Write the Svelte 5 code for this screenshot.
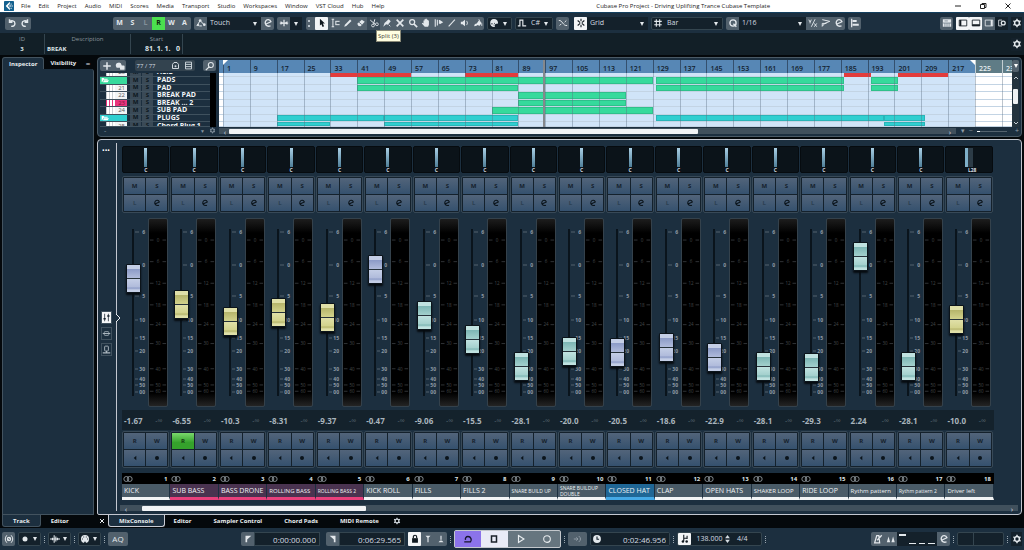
<script lang="ts">
  type Clip = { row: number; from: number; to: number; color: string };

  const icons: Record<string, string> = {
    logo: '<rect width="12" height="12" rx="1" fill="#14618f"/><path d="M7 1L2 6l5 5V8.500L4.700 6 7 3.500zM8 3h1v1.500H8zM6.500 5H8v2H6.500zM9 5.500h1.500v1H9zM8 8h1v1.500H8z" fill="#fff"/>',
    undo: '<path d="M3 1.500v3.500h3.500M3.200 4.800C5 2.500 9.500 3 9.500 6.500S6.500 10 5 10" fill="none" stroke="currentColor" stroke-width="1.700"/>',
    redo: '<path d="M9 1.500v3.500H5.500M8.800 4.800C7 2.500 2.500 3 2.500 6.500S5.500 10 7 10" fill="none" stroke="currentColor" stroke-width="1.700"/>',
    automation: '<path d="M1 9.500L5 3l5 5.500M4 9.500h3" fill="none" stroke="currentColor" stroke-width="1.200"/><circle cx="5" cy="3" r="1.600" fill="currentColor"/><circle cx="10" cy="8" r="1.600" fill="currentColor"/><circle cx="2.500" cy="8.500" r="1.300" fill="currentColor"/>',
    edit: '<path d="M3 7.500L9.500 4.500C8.500 1.500 4.500 1 3 4S4 11 9 9.500" fill="none" stroke="currentColor" stroke-width="1.600"/>',
    scroll: '<path d="M1 6h10M6 2v8" stroke="currentColor" stroke-width="1.500"/><path d="M2 3.500L5 6 2 8.500zM10 3.500L7 6l3 2.500z" fill="currentColor"/>',
    arrow: '<path d="M3.500 1l6 5.500H7l1.500 3.500-1.800.700L5.300 7.400 3.500 9z" fill="currentColor"/>',
    range: '<path d="M2 1.500h3M2 10.500h3M3.500 1.500v9" stroke="currentColor" stroke-width="1.200"/><path d="M6.500 4h5M6.500 8h5M7 4v4" stroke="currentColor" stroke-width="1.200"/>',
    pencil: '<path d="M1.500 10.500l.8-2.500L8.500 1.800l1.700 1.700L4 9.700z" fill="currentColor"/>',
    eraser: '<path d="M1.500 7L7 2l3.500 2.500L5.500 10 3 9.500z" fill="currentColor"/><path d="M3.500 5l3.500 3" stroke="#52616d"/>',
    split: '<path d="M1.500 2.500L8 8M7 1.500L5.500 7" stroke="currentColor" stroke-width="1.200"/><circle cx="4.800" cy="9" r="1.700" fill="none" stroke="currentColor"/><circle cx="9.500" cy="7.500" r="1.700" fill="none" stroke="currentColor"/>',
    glue: '<path d="M1.500 10.500L3 6l5-4.500 2.500 2.500-3.500 4-2-.5z" fill="currentColor"/><path d="M8 8l2 2" stroke="currentColor"/>',
    mute: '<path d="M2 2l8 8M10 2l-8 8" stroke="currentColor" stroke-width="2"/>',
    zoom: '<circle cx="5" cy="4.800" r="3" fill="none" stroke="currentColor" stroke-width="1.500"/><path d="M7 7l4 4" stroke="currentColor" stroke-width="2"/>',
    hand: '<path d="M3 3h1.200V1.500h1.300V1H7v1h1.300v1h1.200v5L8.500 10.500h-4L1 6.500l.8-.8L3 6.500z" fill="currentColor"/>',
    warp: '<path d="M1.500 1.500v9M4 2v7M6.500 2.500v4.500" stroke="currentColor" stroke-width="1.300"/><path d="M7 2.500l4 2.500-4 2.500z" fill="currentColor"/>',
    line: '<path d="M2 10L9.500 2" stroke="currentColor" stroke-width="1.300"/>',
    speaker: '<path d="M1 4.500h2L6 2v8L3 7.500H1z" fill="currentColor"/><path d="M8 3.500q2 2.500 0 5" fill="none" stroke="currentColor"/>',
    bucket: '<path d="M1.500 10c0-2.500 1-3.500 3-3.500L7 3l3.500 3-3 3.500-1.500-1c-1.500 0-2 1.500-4.500 1.500z" fill="currentColor"/><path d="M7 1.500l1.500 3M10.500 6.500v3" stroke="currentColor"/>',
    palette: '<path d="M6 1.200A4.800 4.800 0 1 0 6.500 10.800C8 10 6 8.500 7.500 7.500S11 8 10.800 5.500A4.800 4.800 0 0 0 6 1.200" fill="currentColor"/><path d="M2.500 7h2M5.500 8.500h1M6 6.500h1" stroke="#14212b" stroke-width="1"/>',
    pulse: '<path d="M1 9.500h2.500V2.500H7v7h4" fill="none" stroke="currentColor" stroke-width="1.400"/>',
    cross: '<path d="M1 3c4-1 5 7 10 6M2 9l2-2M8 5l2-2" fill="none" stroke="currentColor" stroke-width="1.200"/>',
    snap: '<path d="M6 1v3M6 8v3M2 3l3 2.500M10 3L7 5.500M2 9l3-2.500M10 9L7 6.500" stroke="currentColor" stroke-width="1.300"/>',
    grid: '<path d="M4 1.500v9M8 1.500v9M1.500 4h9M1.500 8h9" stroke="currentColor" stroke-width="1.300"/>',
    quantize: '<circle cx="6" cy="6" r="3.700" fill="none" stroke="currentColor" stroke-width="1.600"/><path d="M6.500 7l3.500 3.500" stroke="currentColor" stroke-width="1.600"/>',
    ratio: '<path d="M8.500 1.500L4 10.500M1 2l1.500 3L4 2M2.500 5v1.500M7.500 6.500l3 4M10.500 6.500l-3 4" fill="none" stroke="currentColor" stroke-width="1.100"/>',
    groove: '<path d="M1.500 2l9 2-6 2.500L1.500 10V6.500h5" fill="none" stroke="currentColor" stroke-width="1.200"/>',
    align: '<path d="M2 1v10" stroke="currentColor" stroke-width="1.500"/><path d="M3 3.500h5M3 8h7.500" stroke="currentColor" stroke-width="2.500"/>',
    keys: '<rect x="1" y="1.500" width="10" height="9" fill="currentColor"/><path d="M1 6h10M3.500 6v4.500M6 6v4.500M8.500 6v4.500M3 3.500h4" stroke="#5c6c78" stroke-width=".8"/>',
    zoneLeft: '<path d="M1.500 2.500h9v7h-9z" fill="none" stroke="currentColor"/><path d="M3 2.500v7" stroke="currentColor" stroke-width="2"/>',
    zoneLower: '<path d="M1.500 2.500h9v7h-9z" fill="none" stroke="currentColor"/><path d="M1.500 8.500h9" stroke="currentColor" stroke-width="2"/>',
    zoneRight: '<path d="M1.500 2.500h9v7h-9z" fill="none" stroke="currentColor"/><path d="M9 2.500v7" stroke="currentColor" stroke-width="2"/>',
    zoneSetup: '<path d="M6 2.500H2v7h4" fill="none" stroke="currentColor"/><circle cx="7.500" cy="6" r="2.300" fill="none" stroke="currentColor" stroke-width="1.600"/>',
    gear: '<circle cx="6" cy="6" r="2.900" fill="none" stroke="currentColor" stroke-width="1.800"/><path d="M6 1v2M6 9v2M1.700 3.500l1.700 1M8.600 7.500l1.700 1M1.700 8.500l1.700-1M8.600 4.500l1.700-1" stroke="currentColor" stroke-width="1.700"/>',
    plus: '<path d="M6 1.500v9M1.500 6h9" stroke="currentColor" stroke-width="1.800"/>',
    preset: '<path d="M1 6a3.500 3.500 0 0 1 7-1v3H2z" fill="currentColor"/><rect x="6" y="5.500" width="5.500" height="5" rx="1" fill="currentColor"/>',
    home: '<path d="M2 10V4.500l2-2.500h4l2 2.500V10z" fill="none" stroke="currentColor" stroke-width="1.300"/><circle cx="6" cy="7" r="1.300" fill="currentColor"/>',
    list: '<path d="M2 1.500h8v9H2zM2 4.500h8M2 7.500h8" fill="none" stroke="currentColor" stroke-width="1.200"/>',
    search: '<circle cx="7" cy="4.800" r="3" fill="none" stroke="currentColor" stroke-width="1.300"/><path d="M5 7l-4 4" stroke="currentColor" stroke-width="1.500"/>',
    faders: '<path d="M3.500 1v10M8.500 1v10" stroke="currentColor"/><path d="M2 7.500h3M7 4h3" stroke="currentColor" stroke-width="2"/>',
    insert: '<path d="M1 6h10" stroke="currentColor" stroke-width="1.300"/><rect x="3" y="3.500" width="6" height="5" rx="1" fill="none" stroke="currentColor"/>',
    room: '<rect x="3.500" y="1.500" width="5" height="6.500" rx="1" fill="none" stroke="currentColor" stroke-width="1.200"/><path d="M1 10.500h10M6 8v2.500" stroke="currentColor" stroke-width="1.400"/>',
    monitor: '<path d="M8 2.500v7L4 6z" fill="currentColor"/>',
    record: '<circle cx="6" cy="6" r="3" fill="currentColor"/>',
    stereo: '<circle cx="4" cy="6" r="3" fill="none" stroke="currentColor"/><circle cx="8" cy="6" r="3" fill="none" stroke="currentColor"/>',
    midiIn: '<circle cx="6" cy="6" r="2" fill="none" stroke="currentColor" stroke-width="1.300"/><path d="M3.500 1.500q-4 4.500 0 9M8.500 1.500q4 4.500 0 9M5 8l2-4" fill="none" stroke="currentColor" stroke-width="1.200"/>',
    wave: '<path d="M0 6h12M3 4.500v3M5 1.500v9M7 3v6M9 4.500v3" stroke="currentColor" stroke-width="1.300"/>',
    midi: '<circle cx="6" cy="6" r="4.800" fill="currentColor"/><path d="M2.500 6h1M8.500 6h1M4 3.500h1M7 3.500h1M5 10h2" stroke="#14212b" stroke-width="1.300"/>',
    flagL: '<path d="M3 2h7L5 6.500V10H3z" fill="currentColor"/>',
    flagR: '<path d="M9 2H2l5 4.500V10h2z" fill="currentColor"/>',
    lock: '<rect x="2.500" y="5" width="7" height="5.500" fill="currentColor"/><path d="M4 5V3.500a2 2 0 0 1 4 0V5" fill="none" stroke="currentColor" stroke-width="1.400"/>',
    punchIn: '<path d="M3 2h6L6 5zM5.300 4h1.400v6H5.300z" fill="currentColor"/>',
    punchOut: '<path d="M3 10h6L6 6.500zM5.300 2h1.400v6H5.300z" fill="currentColor"/>',
    cycle: '<path d="M1.500 9.500H9c2-2.500.5-6.500-3-6.500C3.500 3 2.500 5 3 7" fill="none" stroke="currentColor" stroke-width="1.600"/>',
    stop: '<path d="M3 2.500h6v7H3z" fill="none" stroke="currentColor" stroke-width="1.800"/>',
    play: '<path d="M3 1.800L9.500 6 3 10.200z" fill="none" stroke="currentColor" stroke-width="1.400"/>',
    rec: '<circle cx="6" cy="6" r="4" fill="none" stroke="currentColor" stroke-width="1.300"/>',
    bounce: '<path d="M1 6h5M4 4l2 2-2 2M7 2.500q4 3.500 0 7" fill="none" stroke="currentColor" stroke-width="1.200"/>',
    clock: '<circle cx="6" cy="6" r="4.700" fill="currentColor"/><path d="M6 3v3.300h2.500" fill="none" stroke="#14212b" stroke-width="1.300"/>',
    tempo: '<path d="M4.500 1v7.500M4.500 5H8M8.500 2v4" fill="none" stroke="currentColor" stroke-width="1.300"/><circle cx="3.500" cy="9" r="1.500" fill="currentColor"/><circle cx="8" cy="9" r="1.500" fill="currentColor"/>',
    metronome: '<path d="M2 10.500L4.500 2H7l1 8.500zM5 7.500L10.500 1.500" fill="none" stroke="currentColor" stroke-width="1.500"/>',
    precount: '<path d="M1 10l2-7 2 7zM6.500 10l2-7 2 7z" fill="currentColor"/>',
    folder: '<path d="M1 9V3h3l1 1h5v1.500H4L2 9zM4.500 6.500H12L10 9.500H3z" fill="currentColor"/>',
  };

  const menus = ['File', 'Edit', 'Project', 'Audio', 'MIDI', 'Scores', 'Media', 'Transport', 'Studio', 'Workspaces', 'Window', 'VST Cloud', 'Hub', 'Help'];
  const states = ['M', 'S', 'L', 'R', 'W', 'A'];
  const tools = ['arrow', 'range', 'pencil', 'eraser', 'split', 'glue', 'mute', 'zoom', 'hand', 'warp', 'line', 'speaker', 'bucket'];
  const lowerTabs = ['MixConsole', 'Editor', 'Sampler Control', 'Chord Pads', 'MIDI Remote'];

  const tracks = [
    { id: 20, name: 'ACID', kind: 'midi' },
    { id: 0, name: 'PADS', kind: 'green' },
    { id: 21, name: 'PAD', kind: 'midi' },
    { id: 22, name: 'BREAK PAD', kind: 'midi' },
    { id: 23, name: 'BREAK ... 2', kind: 'pink' },
    { id: 24, name: 'SUB PAD', kind: 'midi' },
    { id: 1, name: 'PLUGS', kind: 'cyan' },
    { id: 25, name: 'Chord Plug 1', kind: 'midi' },
  ];

  const clips: Clip[] = [
    { row: 0, from: 33, to: 57, color: 'red' },
    { row: 0, from: 73, to: 89, color: 'red' },
    { row: 0, from: 186, to: 194, color: 'red' },
    { row: 0, from: 202, to: 217, color: 'red' },
    { row: 1, from: 41, to: 129, color: 'green' },
    { row: 1, from: 130, to: 186, color: 'green' },
    { row: 1, from: 194, to: 202, color: 'green' },
    { row: 2, from: 41, to: 89, color: 'green' },
    { row: 2, from: 130, to: 186, color: 'green' },
    { row: 2, from: 194, to: 202, color: 'green' },
    { row: 3, from: 89, to: 121, color: 'green' },
    { row: 4, from: 89, to: 121, color: 'green' },
    { row: 5, from: 81, to: 129, color: 'green' },
    { row: 6, from: 17, to: 49, color: 'cyan' },
    { row: 6, from: 49, to: 89, color: 'cyan' },
    { row: 6, from: 130, to: 198, color: 'cyan' },
    { row: 6, from: 198, to: 210, color: 'cyan' },
    { row: 7, from: 17, to: 33, color: 'cyan' },
    { row: 7, from: 49, to: 89, color: 'cyan' },
    { row: 7, from: 198, to: 210, color: 'cyan' },
  ];

  const bars = Array.from({ length: 30 }, (_, i) => i * 8 + 1);

  // share of the timeline width at which a bar starts
  const at = (bar: number) => 0.5 + (bar - 1) * 0.4234;

  const faderMarks = [['6', 15], ['0', 48], ['5', 79], ['10', 103], ['15', 121], ['20', 134], ['30', 152], ['40', 162], ['50', 168], ['00', 175]] as [string, number][];
  const meterMarks = [['0', 14], ['6', 38], ['12', 62], ['18', 86], ['24', 108], ['30', 129], ['40', 157], ['50', 175], ['60', 182]] as [string, number][];

  let channels = $state([
    { name: 'KICK', db: '-1.67', level: 116, cap: 'blue', group: 'plain' },
    { name: 'SUB BASS', db: '-6.55', level: 90, cap: 'yellow', group: 'bass', read: true },
    { name: 'BASS DRONE', db: '-10.3', level: 73, cap: 'yellow', group: 'bass' },
    { name: 'ROLLING BASS', db: '-8.31', level: 82, cap: 'yellow', group: 'bass' },
    { name: 'ROLLING BASS 2', db: '-9.37', level: 77, cap: 'yellow', group: 'bass' },
    { name: 'KICK ROLL', db: '-0.47', level: 125, cap: 'blue', group: 'plain' },
    { name: 'FILLS', db: '-9.06', level: 79, cap: 'teal', group: 'plain' },
    { name: 'FILLS 2', db: '-15.5', level: 55, cap: 'teal', group: 'plain' },
    { name: 'SNARE BUILD UP', db: '-28.1', level: 28, cap: 'teal', group: 'plain' },
    { name: 'SNARE BUILDUP DOUBLE', db: '-20.0', level: 43, cap: 'teal', group: 'plain' },
    { name: 'CLOSED HAT', db: '-20.5', level: 42, cap: 'blue', group: 'selected' },
    { name: 'CLAP', db: '-18.6', level: 47, cap: 'blue', group: 'plain' },
    { name: 'OPEN HATS', db: '-22.9', level: 37, cap: 'blue', group: 'plain' },
    { name: 'SHAKER LOOP', db: '-28.1', level: 28, cap: 'teal', group: 'plain' },
    { name: 'RIDE LOOP', db: '-29.3', level: 27, cap: 'teal', group: 'plain' },
    { name: 'Rythm pattern', db: '2.24', level: 138, cap: 'teal', group: 'plain' },
    { name: 'Rythm pattern 2', db: '-28.1', level: 28, cap: 'teal', group: 'plain' },
    { name: 'Driver left', db: '-10.0', level: 75, cap: 'yellow', group: 'plain', pan: 'L28' },
  ]);

  function nameSize(name: string): string {
    if (name.length > 15) return 'double';
    if (name.length > 13) return 'longer';
    return name.length > 10 ? 'long' : '';
  }
</script>

{#snippet icon(name: string)}
  <svg class="icon" viewBox="0 0 12 12" aria-hidden="true">{@html icons[name]}</svg>
{/snippet}

{#snippet tool(name: string, kind = '')}
  <button class="tool {kind}" aria-label={name}>{@render icon(name)}</button>
{/snippet}

{#snippet picker(label: string, value: string, kind: string)}
  <span class="picker {kind}">
    <select aria-label={label}><option>{value}</option></select>
  </span>
{/snippet}

<div class="app">
  <header class="titlebar">
    <span class="logo">{@render icon('logo')}</span>
    <nav class="menus">
      {#each menus as menu}
        <button class="menu">{menu}</button>
      {/each}
    </nav>
    <h1 class="title">Cubase Pro Project - Driving Uplifting Trance Cubase Template</h1>
    <div class="window-buttons">
      <button aria-label="Minimize"><svg viewBox="0 0 8 8"><path d="M1 4h6" stroke="#222" /></svg></button>
      <button aria-label="Restore"><svg viewBox="0 0 8 8"><path d="M1.500 2.500h4v4h-4zM3 2.500v-1h4v4H5.500" fill="none" stroke="#222" /></svg></button>
      <button aria-label="Close"><svg viewBox="0 0 8 8"><path d="M1.500 1.500l5 5M6.500 1.500l-5 5" stroke="#222" /></svg></button>
    </div>
  </header>

  <div class="toolbar">
    <div class="group history">{@render tool('undo')}{@render tool('redo')}</div>
    <div class="group states">
      {#each states as s}
        <button class="tool" class:on={s === 'R'} class:off={s === 'L'}>{s}</button>
      {/each}
    </div>
    <div class="group">
      {@render tool('automation')}{@render picker('Automation mode', 'Touch', 'w54')}{@render tool('edit')}
    </div>
    <div class="group">{@render tool('scroll')}{@render picker('Auto-scroll', '', 'w12')}</div>
    <div class="group tools">
      <span class="dots"></span>
      {#each tools as t}
        <div class="tool-slot">
          {@render tool(t, t === 'arrow' ? 'white' : t === 'split' ? 'hover' : '')}
          {#if t === 'split'}<span class="tooltip" role="tooltip">Split (3)</span>{/if}
        </div>
      {/each}
    </div>
    <div class="group dark">{@render tool('palette', 'clear')}{@render picker('Color', '', 'w11')}</div>
    <div class="group dark">{@render tool('pulse', 'clear')}{@render picker('Pitch', 'C#', 'w24')}</div>
    <div class="group">{@render tool('cross')}</div>
    <div class="group snap">{@render tool('snap', 'white')}{@render picker('Snap type', 'Grid', 'w61')}</div>
    <div class="group dark">{@render tool('grid', 'clear')}{@render picker('Grid type', 'Bar', 'w58')}</div>
    <div class="group">
      {@render tool('quantize')}{@render picker('Quantize preset', '1/16', 'w67')}{@render tool('ratio')}{@render tool('groove')}{@render tool('edit')}
    </div>
    <div class="group">{@render tool('align')}</div>
    <div class="group push">{@render tool('keys')}</div>
    <div class="group">
      {@render tool('zoneLeft', 'white')}{@render tool('zoneLower', 'white')}{@render tool('zoneRight')}{@render tool('zoneSetup', 'ink')}
    </div>
    <div class="group gear">{@render tool('gear', 'ink')}</div>
  </div>

  <div class="infoline">
    <dl>
      <div class="info-id"><dt>ID</dt><dd>3</dd></div>
      <div class="info-desc"><dt>Description</dt><dd>BREAK</dd></div>
      <div class="info-start"><dt>Start</dt><dd>81. 1. 1. &nbsp; 0</dd></div>
    </dl>
    <div class="group gear">{@render tool('gear', 'ink')}</div>
  </div>

  <main class="workspace">
    <aside class="left-zone">
      <div class="tabs">
        <button class="tab active">Inspector</button>
        <button class="tab">Visibility</button>
        <button class="tab-menu" aria-label="Zone menu">=</button>
      </div>
      <div class="inspector"></div>
      <div class="tabs">
        <button class="tab bottom active">Track</button>
        <button class="tab">Editor</button>
      </div>
    </aside>

    <div class="right-zone">
      <section class="project">
        <div class="tracklist">
          <div class="track-tools">
            <div class="group">{@render tool('plus')}{@render tool('preset')}</div>
            <div class="track-count"><span>77 / 77</span>{@render icon('home')}{@render icon('list')}</div>
            <div class="group">{@render tool('search')}</div>
          </div>
          <div class="rows">
            {#each tracks as track}
              <div class="track {track.kind}">
                <span class="track-head">
                  {#if track.kind === 'green' || track.kind === 'cyan'}
                    <svg class="folder" viewBox="0 0 12 12">{@html icons.folder}</svg>
                  {:else}
                    <i class="keys"></i>{track.id}
                  {/if}
                </span>
                <button class="ms">M</button>
                <button class="ms">S</button>
                <span class="track-name">{track.name}</span>
              </div>
            {/each}
          </div>
          <div class="track-foot"><span>-</span><span class="foot-arrow">▼</span>{@render icon('gear')}</div>
        </div>

        <div class="arrange">
          <div class="arrange-top">
            <div class="timeline">
              <div class="ruler">
                {#each bars as bar}
                  <span class="bar" class:outside={bar > 224} style="left: {at(bar)}%">{bar}</span>
                {/each}
                <span class="past" style="left: {at(225)}%"></span>
                <svg class="locator start" viewBox="0 0 5 5" style="left: {at(1)}%"><path d="M0 0h5L0 5z" /></svg>
                <svg class="locator end" viewBox="0 0 5 5" style="left: {at(225)}%"><path d="M5 0H0l5 5z" /></svg>
              </div>
              <div class="lanes">
                <span class="cycle-range" style="left: {at(1)}%; right: {100 - at(225)}%"></span>
                {#each tracks as track, row}
                  <div class="lane">
                    {#each clips.filter((c) => c.row === row) as clip}
                      <span class="clip {clip.color}" style="left: {at(clip.from)}%; width: {at(clip.to) - at(clip.from)}%"></span>
                    {/each}
                  </div>
                {/each}
                {#each bars as bar}
                  <span class="gridline" style="left: {at(bar)}%"></span>
                {/each}
              </div>
              <span class="playhead" style="left: {at(97)}%"></span>
            </div>
            <div class="vscroll">
              <button class="ruler-menu" aria-label="Ruler format"></button>
              <svg viewBox="0 0 6 4"><path d="M1 3l2-2 2 2" /></svg>
              <span class="vthumb"></span>
              <svg class="down" viewBox="0 0 6 4"><path d="M1 1l2 2 2-2" /></svg>
            </div>
          </div>
          <div class="hscroll">
            <div class="bar-track">
              <span class="chev">‹</span><span class="thumb arrange-thumb"></span><span class="chev last">›</span>
            </div>
            <div class="zoombar"><span>▾</span><span>−</span><i></i><span>+</span></div>
          </div>
        </div>
      </section>

      <section class="mixer">
        <div class="mixer-side">
          <button class="more" aria-label="More">•••</button>
          <div class="views">
            <button class="view on" aria-label="Faders">{@render icon('faders')}</button>
            <button class="view" aria-label="Inserts">{@render icon('insert')}</button>
            <button class="view" aria-label="Control Room">{@render icon('room')}</button>
            <svg class="expander" viewBox="0 0 5 8"><path d="M0 0l4 4-4 4" /></svg>
          </div>
        </div>
        <div class="console">
          <div class="channels">
            {#each channels as ch, i}
              <article class="channel">
                <div class="pan" class:left={ch.pan}><i></i><span>{ch.pan ?? 'C'}</span></div>
                <div class="pad">
                  <button>M</button><button>S</button><button class="dim">L</button><button class="big" aria-label="Edit channel">{@render icon('edit')}</button>
                </div>
                <div class="fader-area">
                  <div class="fader">
                    <svg class="scale" viewBox="0 0 24 192">
                      <rect x="10" y="12" width="2" height="167" fill="#0a141c" />
                      {#each faderMarks as [text, y]}
                        <path d="M13 {y}h{text.length > 1 ? 3 : 4}" stroke="#53626e" />
                        <text x="23" y={y + 2} text-anchor="end">{text}</text>
                      {/each}
                    </svg>
                    <input class="cap-{ch.cap}" type="range" min="0" max="163" bind:value={ch.level} aria-label="{ch.name} level" />
                  </div>
                  <svg class="meter" viewBox="0 0 20 189">
                    {#each meterMarks as [text, y]}
                      <path d="M1 {y}h4M15 {y}h4" stroke="#34383b" />
                      <text x="10" y={y + 2} text-anchor="middle">{text}</text>
                    {/each}
                  </svg>
                </div>
                <div class="levels"><b>{ch.db}</b><span>-∞</span></div>
                <div class="pad">
                  <button class:read={ch.read}>R</button><button>W</button>
                  <button class="big" aria-label="Monitor">{@render icon('monitor')}</button>
                  <button class="big" aria-label="Record enable">{@render icon('record')}</button>
                </div>
                <div class="number">{@render icon('stereo')}<span>{i + 1}</span></div>
                <div class="name {ch.group} {nameSize(ch.name)}"><span>{ch.name}</span></div>
              </article>
            {/each}
          </div>
          <div class="bar-track mixer-scroll">
            <span class="chev">‹</span><span class="thumb mixer-thumb"></span><span class="chev last">›</span>
          </div>
        </div>
      </section>

      <div class="tabs lower-tabs">
        <button class="close" aria-label="Close lower zone"><svg viewBox="0 0 6 6"><path d="M1 1l4 4M5 1L1 5" /></svg></button>
        {#each lowerTabs as t, i}
          <button class="tab" class:bottom={i === 0} class:active={i === 0}>{t}</button>
        {/each}
        <button class="tab-gear" aria-label="Tab setup">{@render icon('gear')}</button>
      </div>
    </div>
  </main>

  <footer class="transport">
    <div class="group">{@render tool('midiIn')}</div>
    <div class="group dark">{@render tool('record', 'clear')}{@render picker('Record mode', '', 'w9')}</div>
    <span class="grip"></span>
    <div class="group dark">{@render tool('wave', 'clear')}{@render picker('Audio record mode', '', 'w9')}</div>
    <span class="grip"></span>
    <div class="group dark">{@render tool('midi', 'clear')}{@render picker('MIDI record mode', '', 'w9')}</div>
    <span class="grip"></span>
    <div class="group"><button class="tool aq">AQ</button></div>
    <div class="group locator-left">{@render tool('flagL')}<input class="time" aria-label="Left locator" value="0:00:00.000" /></div>
    <div class="group locator-right">{@render tool('flagR')}<input class="time" aria-label="Right locator" value="0:06:29.565" /></div>
    <div class="group">{@render tool('lock', 'white')}{@render tool('punchIn')}{@render tool('punchOut')}</div>
    <span class="grip"></span>
    <div class="deck">
      <button class="cycle" aria-label="Cycle">{@render icon('cycle')}</button>
      <button class="stop" aria-label="Stop">{@render icon('stop')}</button>
      <button aria-label="Play">{@render icon('play')}</button>
      <button aria-label="Record">{@render icon('rec')}</button>
    </div>
    <span class="grip"></span>
    <div class="group bounce">{@render tool('bounce', 'wide')}</div>
    <div class="group dark">{@render tool('clock', 'clear')}<input class="time" aria-label="Time" value="0:02:46.956" /></div>
    <span class="grip"></span>
    <div class="group dark tempo">
      {@render tool('tempo', 'white')}
      <input aria-label="Tempo" value="138.000" />
      <svg class="spin" viewBox="0 0 6 10"><path d="M3 0l3 4H0zM3 10l3-4H0z" /></svg>
      <span class="signature">4/4</span>
    </div>
    <span class="grip"></span>
    <div class="group click push">
      {@render tool('metronome')}{@render tool('precount')}
      <div class="beats"><i></i><i></i><i></i><i></i></div>
      {@render tool('edit')}
    </div>
    <span class="grip"></span>
    <div class="group dark output"><i></i><i></i></div>
    <span class="grip"></span>
    <div class="group gear">{@render tool('gear', 'ink')}</div>
  </footer>
</div>

<style>
  * { box-sizing: border-box; }

  :global(body) { margin: 0; background: #04080b; }

  .app {
    display: flex;
    flex-direction: column;
    min-height: 100vh;
    background: #04080b;
    color: #d5dce2;
    font-family: "Open Sans", "Noto Sans", sans-serif;
    font-size: 7px;
    line-height: 8px;
  }

  button, input, select { font: inherit; color: inherit; border: 0; padding: 0; margin: 0; background: none; }

  .icon { display: block; width: 10px; height: 10px; flex: none; }

  /* title bar */
  .titlebar { display: flex; align-items: center; height: 12px; background: #fff; color: #1c1c1c; padding: 0 12px 0 4px; }
  .menus { display: flex; gap: 8px; margin-left: 7px; white-space: nowrap; font-size: 6px; }
  .title { flex: 1; margin: 0; padding-left: 28px; font-size: 6px; font-weight: 400; text-align: center; }
  .window-buttons { display: flex; gap: 17px; }
  .window-buttons svg { display: block; width: 8px; height: 8px; }

  /* toolbar */
  .toolbar, .transport { display: flex; align-items: center; background: #1c2f3f; }
  .toolbar { height: 21px; gap: 3px; padding: 0 2px 0 5px; border-top: 1px solid #14405f; }

  .group { display: flex; flex: none; height: 13px; border-radius: 2px; background: #52616d; }
  .group.dark { background: #14212b; border: 1px solid #34454f; }
  .group.push { margin-left: auto; }
  .history { margin-right: 79px; }
  .snap { margin-left: 2px; }

  .tool { display: flex; align-items: center; justify-content: center; width: 13px; height: 100%; color: #e3e8ec; flex: none; font-weight: 700; }
  .tool.on { background: #4be04f; color: #10240f; }
  .tool.off { color: #82909a; }
  .tool.white { background: #f3f5f7; color: #10181f; border-radius: 1px; }
  .tool.hover { background: #3a4a57; }
  .tool.ink { background: #14212b; }
  .tool.clear { width: 12px; background: transparent; }
  .tool.wide { width: 19px; color: #8f9ba5; }
  .tool.aq { width: 20px; font-weight: 400; font-size: 8px; }

  .gear .tool { width: 11px; }
  .dots { width: 7px; border-left: 2px dotted #b8c2ca; margin: 3px 0 3px 2px; }
  .tools { margin-left: 1px; }
  .tool-slot { position: relative; display: flex; }

  .tooltip {
    position: absolute;
    top: 13px;
    left: 9px;
    z-index: 5;
    padding: 1px;
    background: #ffffe1;
    color: #3c3c34;
    border: 1px solid #8a8a78;
    font-size: 6px;
    white-space: nowrap;
  }

  .picker { position: relative; display: flex; background: #14212b; }
  .picker::after { content: ''; position: absolute; right: 4px; top: 5px; border: 2px solid transparent; border-top: 4px solid #e3e8ec; border-bottom: 0; }
  .dark .picker::after { top: 4px; }
  .picker select { appearance: none; width: 100%; padding-left: 3px; outline: 0; }
  .w9 { width: 9px; }
  .w11 { width: 11px; }
  .w12 { width: 12px; }
  .w24 { width: 24px; }
  .w54 { width: 54px; }
  .w58 { width: 58px; }
  .w61 { width: 61px; }
  .w67 { width: 67px; }

  /* info line */
  .infoline { display: flex; align-items: center; justify-content: space-between; height: 22px; padding-right: 2px; background: #121f27; }
  dl { display: flex; margin: 0; font-size: 6px; }
  dl div { border-right: 1px solid #34454f; padding: 1px 2px; }
  dt { text-align: center; color: #8a959d; }
  dd { margin: 2px 0 0; color: #dfe5e9; font-weight: 700; }
  .info-id { width: 45px; }
  .info-id dd { text-align: center; }
  .info-desc { width: 86px; }
  .info-start { width: 52px; }
  .info-start dd { text-align: right; font-size: 7px; }

  /* zones */
  .workspace { flex: 1; display: flex; gap: 3px; padding: 2px 2px 1px; }
  .left-zone { display: flex; flex-direction: column; width: 92px; flex: none; }
  .inspector { flex: 1; background: #1c2f3f; border: 1px solid #43535f; border-top: 0; border-radius: 0 3px 0 0; }

  .tabs { display: flex; height: 12px; align-items: center; font-size: 6px; }
  .tab { height: 12px; padding: 0 6px; color: #e8edf0; font-weight: 700; }
  .tab.active { background: #1c2f3f; border: 1px solid #43535f; border-bottom: 0; border-radius: 3px 3px 0 0; padding: 0 6px; }
  .tab.bottom.active { border: 1px solid #43535f; border-top: 0; border-radius: 0 0 3px 3px; padding: 0 10px; }
  .bottom + .tab { margin-left: 4px; }
  .tab-menu { margin-left: auto; width: 12px; font-size: 8px; }
  .close { width: 11px; }
  .close svg { display: block; width: 6px; height: 6px; margin-left: 2px; stroke: #e8edf0; }
  .lower-tabs .tab { padding: 0 8px; margin-right: 6px; }
  .lower-tabs .tab.bottom.active { border-color: #c9ccd4; padding: 0 10px; margin-right: 0; }
  .lower-tabs .bottom + .tab { margin-left: 1px; }
  .tab-gear .icon { width: 8px; height: 8px; }

  .right-zone { flex: 1; min-width: 0; display: flex; flex-direction: column; }

  /* project window */
  .project { display: flex; gap: 3px; padding: 2px; margin-bottom: 2px; background: #1c2f3f; border: 1px solid #4a5a66; border-radius: 4px; }
  .tracklist { width: 116px; flex: none; }
  .track-tools { display: flex; height: 13px; justify-content: space-between; }
  .track-tools .group { height: 11px; }
  .track-count { display: flex; align-items: center; gap: 4px; width: 60px; height: 11px; padding: 0 2px; background: #33434f; border-radius: 2px; font-size: 6px; }
  .track-count span { flex: 1; }
  .track-count .icon { width: 9px; height: 9px; }

  .rows, .lanes { display: grid; grid-template-rows: 4px repeat(6, 1fr) 5px; height: 54px; overflow: hidden; }
  .rows { border-right: 6px solid #000; }
  .track { display: flex; align-items: center; min-height: 0; overflow: hidden; border-bottom: 1px solid #3f515e; color: #f2f5f7; font-weight: 700; }
  .track:first-child { align-items: flex-end; }
  .track:last-child { align-items: flex-start; }
  .track-head { display: flex; align-items: center; justify-content: space-between; width: 21px; height: 8px; margin: 0 3px 0 6px; padding-right: 2px; flex: none; background: #f2f4f5; color: #555; font-size: 6px; font-weight: 400; }
  .keys { width: 9px; height: 8px; background: repeating-linear-gradient(90deg, #c9ced2 0 1px, #fff 1px 3px); }
  .pink .track-head { background: #e8357c; color: #7c1440; }
  .pink .keys { background: repeating-linear-gradient(90deg, #e8357c 0 1px, #fff 1px 3px); }
  .green .track-head, .cyan .track-head { width: 27px; margin-left: 0; color: #fff; }
  .green .track-head { background: #36da9c; }
  .cyan .track-head { background: #2fcfd0; }
  .folder { width: 10px; height: 8px; }
  .ms { width: 11px; height: 7px; margin-right: 1px; background: #3a4a57; color: #0d1820; font-size: 6px; line-height: 7px; font-weight: 700; }
  .track-name { margin-left: 3px; white-space: nowrap; }
  .track-foot { display: flex; align-items: center; gap: 4px; height: 7px; padding-left: 4px; color: #8794a0; }
  .foot-arrow { margin-left: auto; font-size: 5px; }
  .track-foot .icon { width: 7px; height: 7px; }

  .arrange { flex: 1; min-width: 0; }
  .arrange-top { display: flex; }
  .timeline { position: relative; flex: 1; overflow: hidden; }
  .ruler { position: relative; height: 13px; background: #5787b5; overflow: hidden; }
  .bar { position: absolute; z-index: 1; top: 0; height: 13px; padding: 5px 0 0 3px; border-left: 1px solid #34506e; color: #13202c; font-weight: 600; }
  .bar.outside { color: #e8eef0; border-color: #c3ced2; }
  .past { position: absolute; top: 0; right: 0; bottom: 0; background: #5f7c86; }
  .locator { position: absolute; top: 0; z-index: 2; width: 5px; height: 5px; fill: #fff; }
  .locator.end { transform: translateX(-100%); }
  .lanes { position: relative; background: #fff; }
  .cycle-range { position: absolute; top: 0; bottom: 0; background: #d0e4f8; }
  .lane { position: relative; min-height: 0; border-bottom: 1px solid #c3d4e4; }
  .lane .clip { position: absolute; top: 0; bottom: 0; border: 1px solid #2fc08b; background: #36da9c; }
  .lane .clip.red { bottom: -1px; background: #e23c3c; border: 0; }
  .lane .clip.cyan { background: #2fcfd0; border-color: #29b4b8; }
  .gridline { position: absolute; top: 0; bottom: 0; width: 1px; background: rgba(90, 110, 130, 0.4); }
  .playhead { position: absolute; top: 0; bottom: 0; width: 2px; margin-left: -2px; background: #85888c; }

  .vscroll { display: flex; flex-direction: column; align-items: center; width: 7px; background: #24343f; }
  .vscroll svg { width: 6px; height: 4px; margin: 4px 0 9px; fill: none; stroke: #c3ccd3; }
  .vscroll svg.down { margin: auto 0 2px; }
  .ruler-menu { display: flex; align-items: center; justify-content: center; width: 7px; height: 12px; border-radius: 2px; background: #52616d; }
  .ruler-menu::after { content: ''; border: 2px solid transparent; border-top: 4px solid #fff; border-bottom: 0; }
  .vthumb { width: 5px; height: 15px; border-radius: 1px; background: #eef1f3; }

  .hscroll { display: flex; gap: 5px; height: 7px; padding-top: 1px; align-items: center; }
  .bar-track { display: flex; flex: 1; align-items: center; height: 6px; padding: 0 2px; background: #40505c; }
  .chev { width: 8px; line-height: 5px; font-size: 8px; text-align: center; }
  .chev.last { margin-left: auto; }
  .thumb { height: 5px; border-radius: 1px; background: #f2f4f6; }
  .arrange-thumb { width: 64%; }
  .zoombar { display: flex; align-items: center; gap: 4px; width: 58px; color: #8f9ca6; line-height: 6px; }
  .zoombar i { flex: 1; height: 1px; margin-right: 4px; background: linear-gradient(90deg, #fff 3px, #53626e 3px); }

  /* mixer */
  .mixer { display: flex; padding: 3px 3px 3px 0; background: #1c2f3f; border: 1px solid #c3c7d0; border-radius: 4px; border-bottom-left-radius: 2px; }
  .mixer-side { display: flex; flex-direction: column; align-items: center; width: 18px; padding-right: 2px; flex: none; }
  .more { margin-top: 4px; font-size: 7px; color: #fff; }
  .views { position: relative; display: flex; flex-direction: column; gap: 3px; margin-top: 156px; }
  .view { display: flex; align-items: center; justify-content: center; width: 11px; height: 13px; border: 1px solid #40515e; color: #aeb9c1; }
  .view .icon { width: 9px; height: 9px; }
  .view.on { background: #f6f7f8; color: #16222c; }
  .expander { position: absolute; left: 15px; top: 3px; width: 5px; height: 8px; fill: #1c2f3f; stroke: #eef1f3; }

  .console { flex: 1; min-width: 0; padding-top: 3px; border-left: 1px solid #c3c7d0; }
  .channels { display: flex; padding: 0 24px 0 5px; }
  .channel { flex: 1; min-width: 0; }

  .pan { display: flex; flex-direction: column; align-items: center; height: 27px; margin-right: 1px; padding-top: 1px; background: #0b1319; border: 1px solid #060b0f; border-radius: 2px; }
  .pan i { width: 3px; height: 19px; background: linear-gradient(#a9cfe4, #4f7f99); flex: none; }
  .pan span { font-size: 5px; line-height: 6px; font-weight: 700; }
  .pan.left i { width: 8px; background: linear-gradient(90deg, #7fb0c9 3px, #2c3b46 3px); }
  .pan.left span { padding-left: 6px; }

  .pad { display: grid; grid-template-columns: 1fr 1fr; grid-template-rows: 1fr 1fr; gap: 1px; height: 37px; margin: 3px 1px 4px 0; padding: 1px; background: #14212c; border: 1px solid #384957; border-radius: 2px; }
  .pad button { display: flex; align-items: center; justify-content: center; background: linear-gradient(#52647a, #35516e); color: #15212c; font-size: 6px; font-weight: 700; }
  .pad button.dim { color: #2c4052; }
  .pad button.big { color: #0b141b; }
  .pad .icon { width: 8px; height: 8px; }
  .pad button.read { background: linear-gradient(#7ad86c, #35a22c 60%); color: #123c10; }

  .fader-area { display: flex; height: 193px; gap: 2px; }
  .fader { display: grid; width: 24px; height: 192px; }
  .scale, .fader input { grid-area: 1 / 1; width: 24px; height: 192px; }
  .scale text { fill: #8f9ba5; font-size: 5px; font-weight: 700; }
  .meter { width: 20px; height: 189px; margin-top: 1px; background: linear-gradient(#1d1d1d, #000 14px, #000 174px, #242424); border: 1px solid #34414b; border-radius: 2px; }
  .meter text { fill: #44484b; font-size: 5px; }

  .fader input { appearance: none; writing-mode: vertical-lr; direction: rtl; width: 22px; background: transparent; }
  .fader input::-webkit-slider-runnable-track { background: transparent; width: 22px; }
  .fader input::-webkit-slider-thumb {
    appearance: none;
    width: 15px;
    height: 29px;
    margin-left: 4px;
    border: 1px solid #0c141a;
    border-radius: 1px;
    background: linear-gradient(var(--edge) 4px, var(--dark) 4px, var(--mid) 13px, #26323a 13px, #26323a 14px, var(--edge) 14px, var(--mid) 22px, var(--dark) 23px, var(--edge) 25px);
    box-shadow: 0 2px 2px #060b10;
  }
  .cap-blue { --edge: #c4cee6; --mid: #b0bbdb; --dark: #8b9ac6; }
  .cap-yellow { --edge: #e0e0a8; --mid: #d2d28c; --dark: #b5b46a; }
  .cap-teal { --edge: #c0e2e0; --mid: #a3d0cd; --dark: #7cb5b3; }

  .levels { display: flex; align-items: center; justify-content: space-between; height: 20px; margin-bottom: 1px; padding: 2px 8px 0 2px; background: #14222c; color: #5c6a75; }
  .levels b { color: #a9b4bc; font-size: 8px; font-weight: 700; }
  .levels + .pad { margin: 0 1px 5px 0; }

  .number { display: flex; align-items: center; justify-content: space-between; height: 11px; padding: 0 3px 0 1px; background: #000; color: #dde3e7; font-size: 6px; font-weight: 700; }
  .number .icon { color: #9aa3aa; }
  .name { display: flex; align-items: center; height: 16px; padding-left: 2px; border-right: 1px solid #1c2f3f; border-bottom: 3px solid #f2f4f5; background: #4a5b67; color: #eef1f3; white-space: nowrap; overflow: hidden; }
  .name.long { font-size: 6px; }
  .name.longer { font-size: 5px; }
  .name.double { font-size: 5px; line-height: 6px; white-space: normal; }
  .name.bass { background: #4a3350; border-bottom-color: #e8407c; }
  .name.selected { background: #1f6695; border-bottom-color: #45a9e6; }

  .mixer-scroll { margin: 5px 0 0 3px; }
  .mixer-thumb { width: 25%; margin-left: 12px; }

  /* transport */
  .transport { height: 22px; gap: 3px; padding: 0 2px; }
  .transport .group { height: 14px; }
  .transport .picker::after { right: 3px; top: 4px; }
  .grip { width: 1px; height: 7px; border-left: 1px dotted #9aa6b0; }
  .time { width: 66px; padding-right: 3px; background: #14212b; border: 1px solid #34454f; text-align: right; font-size: 8px; outline: 0; }
  .locator-left { margin-left: 110px; }
  .locator-right { margin-left: 3px; }
  .dark .time { border: 0; }

  .deck { display: flex; width: 107px; height: 18px; border: 1px solid #c3c7cc; border-radius: 2px; background: #66757f; }
  .deck button { flex: 1; display: flex; align-items: center; justify-content: center; color: #e9edf0; }
  .deck .cycle { background: #8b73ea; color: #16152b; }
  .deck .stop { background: #e9ebf6; color: #1b222a; }

  .tempo { width: 85px; align-items: center; }
  .tempo input { width: 34px; padding-left: 3px; text-align: center; }
  .spin { width: 5px; height: 8px; fill: #d5dce2; }
  .signature { padding-left: 7px; }
  .beats { display: flex; align-items: flex-end; gap: 3px; width: 40px; padding: 2px; background: #14212b; }
  .beats i { flex: 1; height: 1px; background: #e3e8ec; }
  .beats i:first-child { align-self: flex-start; height: 2px; }
  .output { width: 47px; }
  .output i { flex: 1; border-right: 1px solid #34454f; }
  .output i + i { flex: 2; border: 0; }
</style>
